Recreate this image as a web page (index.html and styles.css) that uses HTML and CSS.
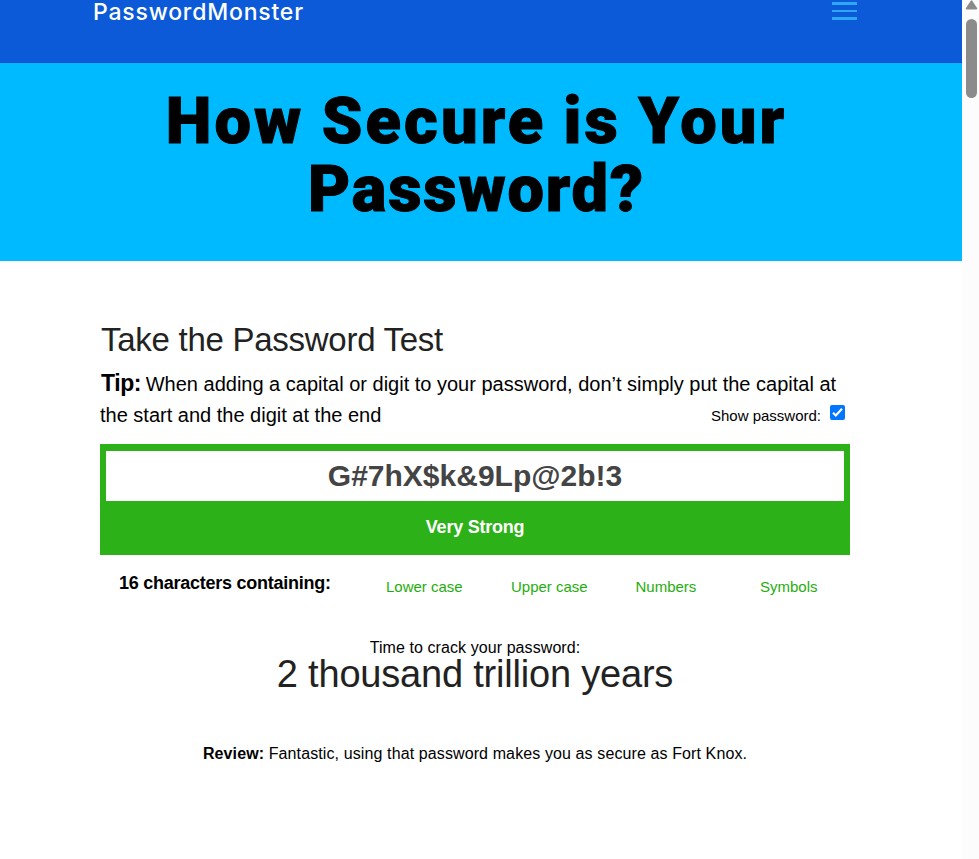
FILE: index.html
```html
<!DOCTYPE html>
<html lang="en">
<head>
<meta charset="utf-8">
<title>PasswordMonster</title>
<link rel="stylesheet" href="styles.css">
</head>
<body>
<div class="page">
  <header class="topbar">
    <span class="logo">PasswordMonster</span>
    <div class="menu"><i></i><i></i><i></i></div>
  </header>
  <section class="hero">
    <h1><span class="l1">How Secure is Your</span><br><span class="l2">Password?</span></h1>
  </section>
  <main>
    <h2><span>Take the Password Test</span></h2>
    <div class="tip">
      <p><b>Tip:</b> <span class="t1">When adding a capital or digit to your password, don’t simply put the capital at</span></p>
      <div class="tiprow">
        <span class="t2">the start and the digit at the end</span>
        <label><span class="show">Show password:</span>
          <svg width="15" height="15" viewBox="0 0 15 15"><rect width="15" height="15" rx="2" fill="#0075ff"/><path d="M3 7.7 5.8 10.5 12 3.7" fill="none" stroke="#fff" stroke-width="2.2"/></svg>
        </label>
      </div>
    </div>
    <div class="box">
      <div class="field"><span>G#7hX$k&amp;9Lp@2b!3</span></div>
      <div class="strength"><span>Very Strong</span></div>
    </div>
    <div class="sets">
      <b><span>16 characters containing:</span></b>
      <span class="set">Lower case</span><span class="set">Upper case</span><span class="set">Numbers</span><span class="set">Symbols</span>
    </div>
    <p class="crack"><span>Time to crack your password:</span></p>
    <p class="time"><span>2 thousand trillion years</span></p>
    <p class="review"><b>Review:</b> <span>Fantastic, using that password makes you as secure as Fort Knox.</span></p>
  </main>
</div>
<aside class="scroll">
  <svg width="17" height="100" viewBox="0 0 17 100"><path d="M9.5 1.3 14.3 8.5H4.7Z" fill="#8b8b8b" stroke="#8b8b8b" stroke-width="1.8" stroke-linejoin="round"/><rect x="4" y="19" width="11" height="79" rx="5.5" fill="#8b8b8b"/></svg>
</aside>
</body>
</html>
```

FILE: styles.css
```css
* { box-sizing: border-box; }
body {
  margin: 0;
  display: flex;
  height: 859px;
  overflow: hidden;
  background: #fff;
  color: #000;
  font-family: "Liberation Sans", Arial, sans-serif;
}
p, h1, h2 { margin: 0; font-weight: 400; white-space: nowrap; }
.page { width: 962px; flex: none; }
.scroll { width: 17px; background: #fcfcfc; }
.scroll svg { display: block; }
.topbar {
  height: 63px;
  padding: 0 105px 0 93px;
  display: flex;
  justify-content: space-between;
  background: #0c5ad8;
  border-bottom: 1px solid #0751d2;
}
.logo {
  color: #fff;
  font: 500 23px/24px Inter, sans-serif;
  letter-spacing: 0.8px;
}
.menu { display: flex; flex-direction: column; gap: 5px; padding-top: 2px; }
.menu i { width: 25px; height: 2.6px; background: #2ea8f5; }
.hero {
  height: 198px;
  padding: 24px 9px 0 0;
  background: #00baff;
  text-align: center;
}
h1 { font: 900 65px/68px Roboto, sans-serif; -webkit-text-stroke: 1px #000; }
.l1 { letter-spacing: 3.1px; word-spacing: -2px; }
.l2 { letter-spacing: 1.8px; }
main { width: 750px; margin: 0 0 0 100px; padding-top: 56px; }
h2 { color: #222; font-size: 33px; line-height: 46px; height: 50px; padding-left: 1px; letter-spacing: -0.27px; }
.tip { font-size: 20px; }
.tip p { height: 32px; line-height: 32px; padding-left: 1px; }
.tip b { font-size: 23px; letter-spacing: -0.4px; margin-right: -1px; }
.tiprow { display: flex; justify-content: space-between; height: 45px; padding-right: 5px; line-height: 32px; }
label { display: flex; gap: 9px; font-size: 15px; line-height: 34px; }
label svg { margin-top: 6px; }
.box { height: 111px; padding: 7px 6px 0; background: #2db118; text-align: center; }
.field { height: 50px; background: #fff; color: #444; font: bold 30px/50px "Liberation Sans", sans-serif; }
.strength { color: #fff; font-size: 18px; font-weight: bold; line-height: 52px; letter-spacing: -0.25px; }
.sets { display: grid; grid-template-columns: 286px 125px 124.5px 124.5px 90px; padding-top: 13px; height: 80px; line-height: 30px; }
.sets b { padding-left: 19px; font-size: 18px; letter-spacing: -0.25px; }
.set { padding-top: 4px; color: #1fad0e; font-size: 15px; }
.crack, .time, .review { text-align: center; }
.crack { font-size: 16px; line-height: 26px; height: 24px; letter-spacing: 0.08px; }
.time { color: #222; font-size: 38px; line-height: 31px; height: 83px; letter-spacing: -0.2px; }
.review { font-size: 16px; line-height: 24px; letter-spacing: 0.11px; }
```
